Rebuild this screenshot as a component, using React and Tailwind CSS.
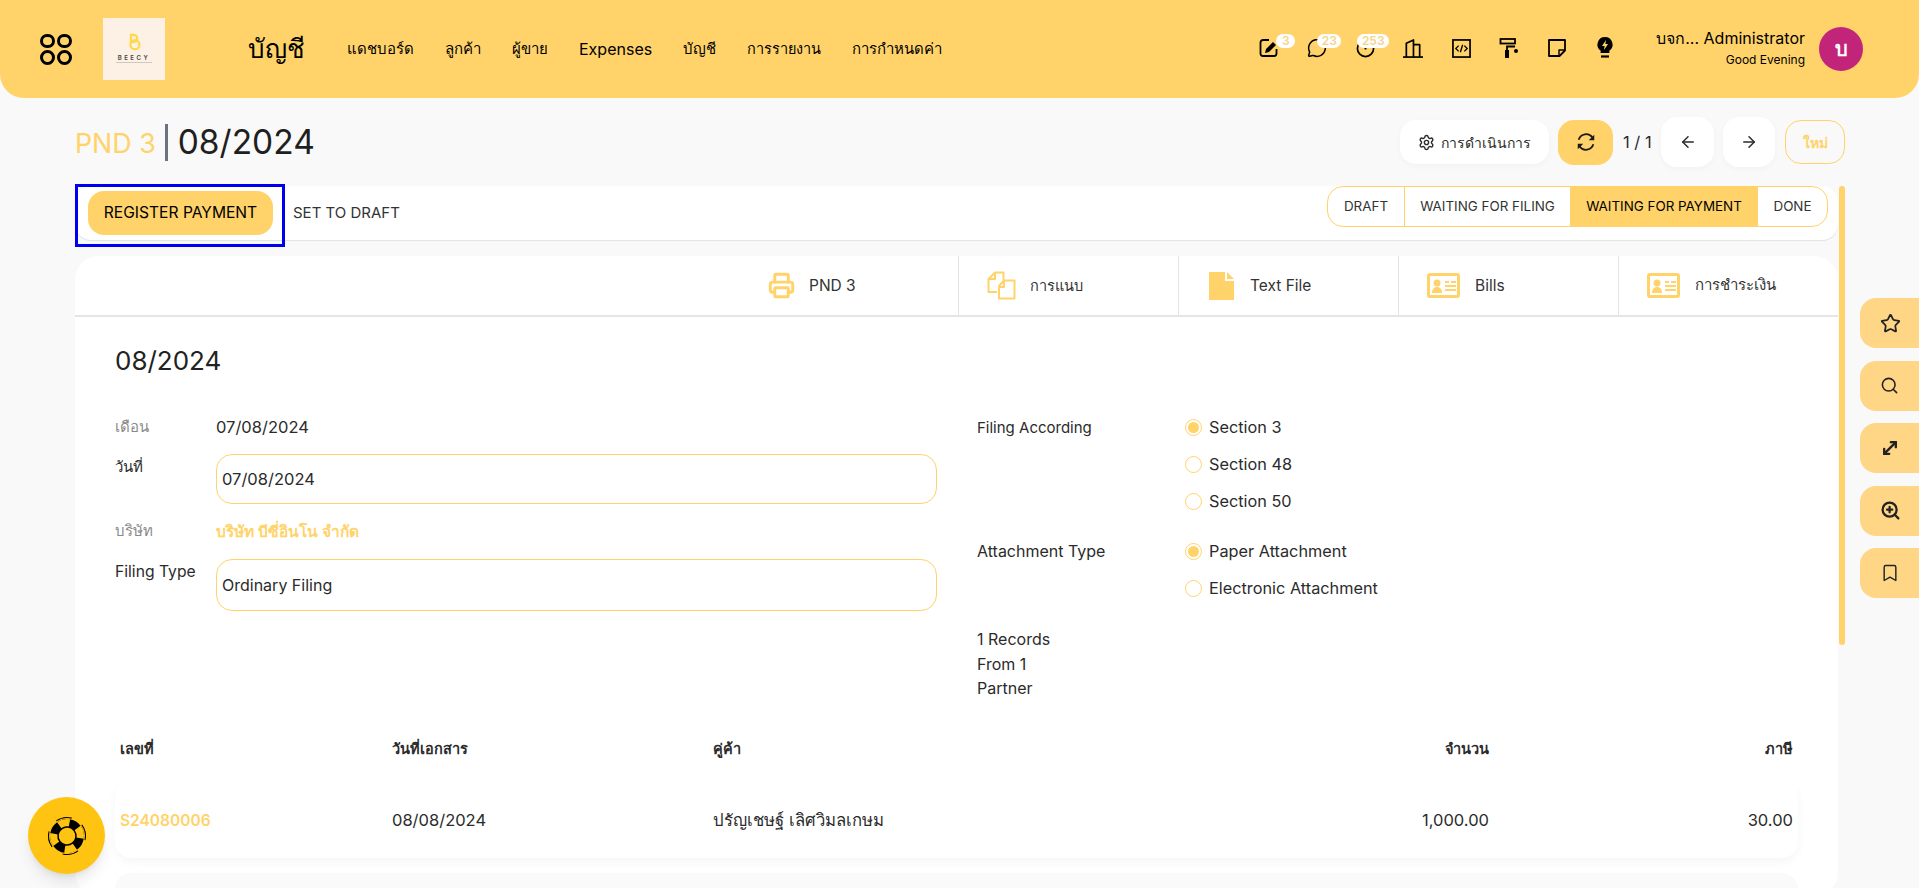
import { ArrowLeft, ArrowRight, Bookmark, MessageCircle, Printer, Search, Settings, Star, ZoomIn, MoveDiagonal } from 'lucide-react';

const FONT = "font-['Inter','Noto_Sans','Noto_Sans_CJK_SC',sans-serif]";

const navItems = [
  { label: 'แดชบอร์ด' },
  { label: 'ลูกค้า' },
  { label: 'ผู้ขาย' },
  { label: 'Expenses', className: 'text-[16px]' },
  { label: 'บัญชี' },
  { label: 'การรายงาน', className: 'text-[14.500px]' },
  { label: 'การกำหนดค่า' },
];

function IdIcon() {
  return (
    <svg viewBox="0 0 33 25" className="w-[33px] h-[25px] text-[#ffd36a]" fill="none" stroke="currentColor">
      <rect x="1.500" y="1.500" width="30" height="22" rx="1.500" strokeWidth="3" />
      <circle cx="10" cy="10" r="3.500" fill="currentColor" stroke="none" />
      <path d="M5 20c0-4 2-6 5-6s5 2 5 6z" fill="currentColor" stroke="none" />
      <path d="M18 9h4M24 9h5M18 13h11M18 17h11" strokeWidth="1.800" />
    </svg>
  );
}

function FileFill() {
  return (
    <svg viewBox="0 0 25 28" className="w-[25px] h-[28px] text-[#ffd36a]" fill="currentColor">
      <path d="M0 0h16v9h9v19H0z" />
      <path d="M18 0l7 7h-7z" />
    </svg>
  );
}

function DocsIcon() {
  return (
    <svg viewBox="0 0 29 29" className="w-[29px] h-[29px] text-[#ffd36a]" fill="none" stroke="currentColor" strokeWidth="2" strokeLinejoin="round">
      <path d="M8 1.500h8.500v8M8 1.500L1.500 8v13H10" />
      <path d="M8 2v6H2" />
      <path d="M17 9.500h10.500v18H12V15z" fill="#fff" />
      <path d="M17 10v6h-5" />
    </svg>
  );
}

function PencilBoxIcon() {
  return (
    <svg viewBox="0 0 20 20" className="w-[20px] h-[20px]" fill="none" stroke="#000" strokeWidth="1.800">
      <path d="M10 2H4a2.500 2.500 0 0 0-2.500 2.500v11A2.500 2.500 0 0 0 4 18h11a2.500 2.500 0 0 0 2.500-2.500V11" />
      <path d="M6 15l1-4 7-7 3 3-7 7z" fill="#000" stroke="none" />
    </svg>
  );
}

function InfoCircleIcon() {
  return (
    <svg viewBox="0 0 20 20" className="w-[19px] h-[19px]" fill="none" stroke="#000" strokeWidth="1.800">
      <circle cx="10" cy="10" r="8.500" />
      <path d="M10 6v5" strokeWidth="2" />
    </svg>
  );
}

function TowersIcon() {
  return (
    <svg viewBox="0 0 21 21" className="w-[21px] h-[21px]" fill="none" stroke="#000" strokeWidth="1.800" strokeLinejoin="round">
      <path d="M0 19.500h21" />
      <path d="M3.500 19.500V5L11 1.500v18" />
      <path d="M11 6.500h6.500v13" />
    </svg>
  );
}

function CodeBoxIcon() {
  return (
    <svg viewBox="0 0 20 20" className="w-[19px] h-[19px]" fill="none" stroke="#000" strokeWidth="1.800">
      <rect x="1" y="1" width="18" height="18" />
      <path d="M7 7l-3 3 3 3M13 7l3 3-3 3M11.200 6l-2.400 8" strokeWidth="1.400" />
    </svg>
  );
}

function RollerIcon() {
  return (
    <svg viewBox="0 0 20 20" className="w-[20px] h-[20px]" fill="none" stroke="#000" strokeWidth="1.800">
      <rect x="1.500" y="1" width="14.500" height="4.500" />
      <path d="M16 8.500H8V12" />
      <rect x="6" y="12" width="4" height="8" fill="#000" stroke="none" />
      <circle cx="17" cy="13" r="2" fill="#000" stroke="none" />
    </svg>
  );
}

function NoteIcon() {
  return (
    <svg viewBox="0 0 18 18" className="w-[18px] h-[18px]" fill="none" stroke="#000" strokeWidth="1.800" strokeLinejoin="round">
      <path d="M1 1h16v10.500L11.500 17H1z" />
      <path d="M17 11h-6v6" strokeWidth="1.400" />
    </svg>
  );
}

function Bulb() {
  return (
    <svg viewBox="0 0 16 24" className="w-[16px] h-[24px]">
      <path d="M8 1a7.500 7.500 0 0 0-4.400 13.600V17h8.800v-2.400A7.500 7.500 0 0 0 8 1z" fill="#000" />
      <path d="M9 4L5 10h2.600L7 14l4-6H8.400z" fill="#ffd36a" />
      <path d="M4 20.500h8" stroke="#000" strokeWidth="2.200" />
    </svg>
  );
}

function Lifebuoy() {
  return (
    <svg viewBox="0 0 44 44" className="w-[44px] h-[44px] -rotate-[37deg]" fill="none">
      <circle cx="22" cy="22" r="17" fill="#000" />
      <circle cx="22" cy="22" r="13" stroke="#ffc412" strokeWidth="8" strokeDasharray="10.400 10" />
      <circle cx="22" cy="22" r="9" fill="#ffc412" stroke="#000" strokeWidth="1.500" />
      <circle cx="22" cy="22" r="18.500" stroke="#000" strokeWidth="1.100" strokeDasharray="16 13.060" />
    </svg>
  );
}

function SyncIcon() {
  return (
    <svg viewBox="0 0 24 24" className="w-[22px] h-[22px]" fill="none" stroke="#1a1a1a" strokeWidth="2">
      <path d="M4 9.500A8.500 8.500 0 0 1 19 7" />
      <path d="M20 14.500A8.500 8.500 0 0 1 5 17" />
      <path d="M21 4v6h-6z" fill="#1a1a1a" stroke="none" />
      <path d="M3 20v-6h6z" fill="#1a1a1a" stroke="none" />
    </svg>
  );
}

function BeecyLogo() {
  return (
    <div className="ml-[31px] w-[62px] h-[62px] bg-[#fdf1e6] flex flex-col items-center pt-[15px]">
      <svg viewBox="0 0 14 20" className="w-[13px] h-[18px]" fill="none" stroke="#ffd94a" strokeWidth="2.500">
        <path d="M3 2h3a3 3 0 0 1 0 8H3z" />
        <circle cx="7.500" cy="13" r="5" />
      </svg>
      <span className="mt-[3px] text-[6px] leading-[7px] font-semibold tracking-[2.500px] text-[#444]">BEECY</span>
      <span className="mt-[1px] w-[36px] h-[1px] bg-[#cfc8c2]" />
    </div>
  );
}

function HeaderIcon({ children, badge, badgeClass }) {
  return (
    <div className="relative w-[20px] h-[20px] flex items-center justify-center">
      {children}
      {badge && (
        <span className={`absolute -top-[4px] h-[14px] rounded-full bg-white text-[12px] leading-[14px] text-center font-semibold text-[#f5d58a] ${badgeClass}`}>{badge}</span>
      )}
    </div>
  );
}

function Radio({ label, checked }) {
  return (
    <div className="flex items-center gap-[7px] h-[37px] text-[16.300px]">
      <span className="w-[17px] h-[17px] rounded-full border border-[#ffd36a] flex items-center justify-center">
        {checked && <span className="w-[11px] h-[11px] rounded-full bg-[#ffd36a]" />}
      </span>
      <span>{label}</span>
    </div>
  );
}

function Tab({ icon, label, className, labelClass = 'text-[15.500px]', first }) {
  return (
    <div className={`w-[220px] flex items-center border-[#e1e3e6] ${first ? '' : 'border-l'} ${className}`}>
      {icon}
      <span className={`text-[#333] ${labelClass}`}>{label}</span>
    </div>
  );
}

function SideButton({ children }) {
  return (
    <div className="w-[59px] h-[50px] rounded-l-2xl bg-[#ffd685] flex items-center pl-[20px] text-[#222]">{children}</div>
  );
}

export default function App() {
  return (
    <div className={`relative h-[888px] overflow-hidden bg-[#f9f9f9] text-[#2b2b2b] ${FONT}`}>
      <header className="h-[98px] bg-[#ffd36a] rounded-b-3xl flex items-center pl-[40px] pr-[56px] text-black">
        <div className="grid grid-cols-2 gap-x-[2px] gap-y-[2px] w-[32px]">
          <span className="w-[15px] h-[14.500px] rounded-full border-[3.500px] border-black" />
          <span className="w-[15px] h-[14.500px] rounded-full border-[3.500px] border-black" />
          <span className="w-[15px] h-[14.500px] rounded-full border-[3.500px] border-black" />
          <span className="w-[15px] h-[14.500px] rounded-full border-[3.500px] border-black" />
        </div>
        <BeecyLogo />
        <div className="ml-[83px] w-[99px] text-[26px] leading-[32px]">บัญชี</div>
        <nav className="flex items-center gap-[31px] text-[15px]">
          {navItems.map(item => <span key={item.label} className={item.className}>{item.label}</span>)}
        </nav>
        <div className="ml-auto -mt-[2px] flex items-center gap-[28px]">
          <HeaderIcon badge="3" badgeClass="left-[17px] w-[19px]"><PencilBoxIcon /></HeaderIcon>
          <HeaderIcon badge="23" badgeClass="left-[10px] w-[24px]"><MessageCircle size={20} strokeWidth={1.800} color="#000" /></HeaderIcon>
          <HeaderIcon badge="253" badgeClass="left-[2px] w-[32px]"><InfoCircleIcon /></HeaderIcon>
          <HeaderIcon><TowersIcon /></HeaderIcon>
          <HeaderIcon><CodeBoxIcon /></HeaderIcon>
          <HeaderIcon><RollerIcon /></HeaderIcon>
          <HeaderIcon><NoteIcon /></HeaderIcon>
          <HeaderIcon><Bulb /></HeaderIcon>
        </div>
        <div className="ml-[41px] -mt-[3px] text-right">
          <div className="text-[16px] leading-[22px]">บจก... Administrator</div>
          <div className="text-[12px] leading-[18px] mt-[2px]">Good Evening</div>
        </div>
        <div className="ml-[14px] w-[44px] h-[44px] rounded-full bg-[#c2247a] text-white flex items-center justify-center text-[20px] font-semibold">บ</div>
      </header>

      <main className="pl-[75px]">
        <div className="w-[1770px] h-[88px] flex items-center">
          <span className="text-[26.800px] text-[#ffd36a] mt-[3px]">PND 3</span>
          <span className="ml-[9px] w-[3px] h-[37px] bg-[#6b7280] mt-[1px]" />
          <span className="ml-[10px] text-[33.500px] text-[#1f1f1f] mt-[1px]">08/2024</span>
          <div className="ml-auto flex items-center text-[14px]">
            <button className="h-[44px] w-[149px] rounded-2xl bg-white flex items-center justify-center gap-[6px] shadow-[0_2px_6px_rgba(0,0,0,0.03)]">
              <Settings size={17} />
              <span>การดำเนินการ</span>
            </button>
            <button className="ml-[9px] h-[45px] w-[55px] rounded-2xl bg-[#ffd36a] flex items-center justify-center"><SyncIcon /></button>
            <span className="ml-[10px] w-[38px] text-[16.500px]">1 / 1</span>
            <button className="h-[50px] w-[53px] rounded-2xl bg-white flex items-center justify-center shadow-[0_2px_6px_rgba(0,0,0,0.03)]"><ArrowLeft size={18} /></button>
            <button className="ml-[9px] h-[50px] w-[52px] rounded-2xl bg-white flex items-center justify-center shadow-[0_2px_6px_rgba(0,0,0,0.03)]"><ArrowRight size={18} /></button>
            <button className="ml-[10px] h-[44px] w-[60px] rounded-2xl border border-[#ffd36a] text-[#ffd36a] font-semibold">ใหม่</button>
          </div>
        </div>

        <div className="flex gap-[1px]">
          <div className="w-[1763px]">
            <div className="relative h-[54px] bg-white rounded-2xl shadow-[0_1px_1px_#dfe3ea] flex pl-[13px] pt-[5px]">
              <button className="w-[185px] h-[44px] rounded-2xl bg-[#ffd36a] text-[15.600px] text-black">REGISTER PAYMENT</button>
              <span className="ml-[20px] mt-[11px] text-[15px] text-[#333]">SET TO DRAFT</span>
              <span className="absolute left-0 -top-[2px] w-[210px] h-[63px] border-[3px] border-[#0000ee]" />
              <div className="ml-auto mr-[10px] mt-[-5px] h-[41px] flex rounded-2xl border border-[#ffd36a] overflow-hidden text-[13.400px] text-[#333]">
                <span className="w-[77px] flex items-center justify-center border-r border-[#ffd36a]">DRAFT</span>
                <span className="w-[165px] flex items-center justify-center">WAITING FOR FILING</span>
                <span className="w-[188px] flex items-center justify-center bg-[#ffd36a] text-black">WAITING FOR PAYMENT</span>
                <span className="w-[69px] flex items-center justify-center">DONE</span>
              </div>
            </div>

            <section className="mt-[16px] h-[640px] bg-white rounded-3xl text-[15px]">
              <div className="h-[61px] flex justify-end border-b-2 border-[#e4e5e8]">
                <Tab first className="pl-[30px] gap-[14px]" icon={<Printer size={27} strokeWidth={2.600} className="text-[#ffd36a]" />} label="PND 3" />
                <Tab className="pl-[28px] gap-[14px]" labelClass="text-[14.500px]" icon={<DocsIcon />} label="การแนบ" />
                <Tab className="pl-[30px] gap-[16px]" icon={<FileFill />} label="Text File" />
                <Tab className="pl-[28px] gap-[15px]" icon={<IdIcon />} label="Bills" />
                <Tab className="pl-[28px] gap-[15px]" labelClass="text-[15px]" icon={<IdIcon />} label="การชำระเงิน" />
              </div>

              <div className="px-[40px]">
                <h2 className="mt-[28px] text-[26px] leading-[32px] text-[#222]">08/2024</h2>
                <div className="mt-[34px] flex">
                  <div className="w-[822px]">
                    <div className="flex h-[37px] items-center -mt-[2px]">
                      <span className="w-[101px] text-[#8a8a8a]">เดือน</span>
                      <span className="text-[16.500px]">07/08/2024</span>
                    </div>
                    <div className="flex mt-[8px]">
                      <span className="w-[101px] mt-[2px]">วันที่</span>
                      <div className="w-[721px] h-[50px] rounded-2xl border border-[#ffd36a] flex items-center pl-[5px] text-[16.500px]">07/08/2024</div>
                    </div>
                    <div className="flex h-[55px] items-center">
                      <span className="w-[101px] text-[#8a8a8a]">บริษัท</span>
                      <span className="text-[#ffd36a] font-semibold text-[15.500px]">บริษัท บีซี่อินโน จำกัด</span>
                    </div>
                    <div className="flex">
                      <span className="w-[101px] mt-[1px] text-[15.700px]">Filing Type</span>
                      <div className="w-[721px] h-[52px] rounded-2xl border border-[#ffd36a] flex items-center pl-[5px] text-[16px]">Ordinary Filing</div>
                    </div>
                  </div>
                  <div className="ml-[40px] -mt-[2px] flex-1">
                    <div className="flex">
                      <span className="w-[208px] leading-[37px]">Filing According</span>
                      <div>
                        <Radio label="Section 3" checked />
                        <Radio label="Section 48" />
                        <Radio label="Section 50" />
                      </div>
                    </div>
                    <div className="flex mt-[13px]">
                      <span className="w-[208px] leading-[37px] text-[16px]">Attachment Type</span>
                      <div>
                        <Radio label="Paper Attachment" checked />
                        <Radio label="Electronic Attachment" />
                      </div>
                    </div>
                    <div className="mt-[20px] leading-[24.500px] text-[16px]">
                      <div>1 Records</div>
                      <div>From 1</div>
                      <div>Partner</div>
                    </div>
                  </div>
                </div>

                <div className="mt-[37px] grid grid-cols-[272px_321px_1fr_200px_304px] px-[5px] font-semibold text-[14.500px]">
                  <span>เลขที่</span>
                  <span>วันที่เอกสาร</span>
                  <span>คู่ค้า</span>
                  <span className="text-right">จำนวน</span>
                  <span className="text-right">ภาษี</span>
                </div>
                <div className="mt-[21px] pt-[3px] h-[78px] rounded-2xl bg-white shadow-[0_4px_10px_rgba(0,0,0,0.04)] grid grid-cols-[272px_321px_1fr_200px_304px] items-center px-[5px] text-[16.500px]">
                  <span className="text-[#ffd36a] font-semibold text-[15.500px]">S24080006</span>
                  <span>08/08/2024</span>
                  <span className="text-[16.700px]">ปรัญเชษฐ์ เลิศวิมลเกษม</span>
                  <span className="text-right">1,000.00</span>
                  <span className="text-right">30.00</span>
                </div>
                <div className="mt-[15px] h-[40px] rounded-t-2xl bg-[#fafafa]" />
              </div>
            </section>
          </div>
          <div className="w-[6px] h-[459px] rounded-full bg-[#ffd36a]" />
        </div>
      </main>

      <aside className="absolute right-0 top-[298px] flex flex-col gap-[12.500px]">
        <SideButton><Star size={21} /></SideButton>
        <SideButton><Search size={19} /></SideButton>
        <SideButton><MoveDiagonal size={20} strokeWidth={2.800} /></SideButton>
        <SideButton><ZoomIn size={21} strokeWidth={2.600} /></SideButton>
        <SideButton><Bookmark size={20} strokeWidth={1.700} /></SideButton>
      </aside>

      <button className="absolute left-[28px] top-[797px] w-[77px] h-[77px] rounded-full bg-[#ffc412] shadow-lg flex items-center justify-center">
        <Lifebuoy />
      </button>
    </div>
  );
}
